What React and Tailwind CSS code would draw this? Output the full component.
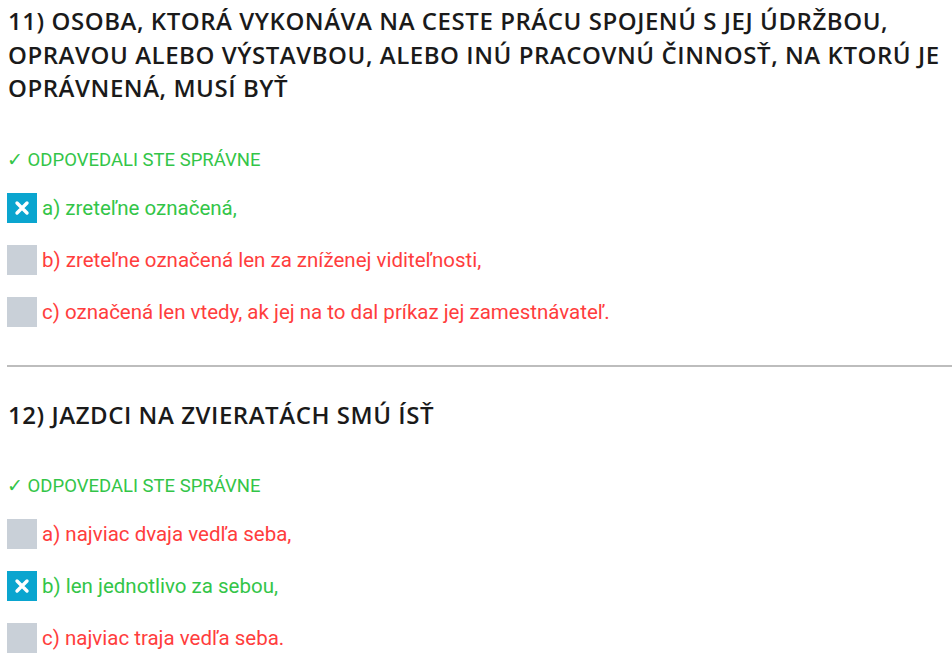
import React from "react";

const QUESTIONS = [
  {
    num: 11,
    title: "Osoba, ktorá vykonáva na ceste prácu spojenú s jej údržbou, opravou alebo výstavbou, alebo inú pracovnú činnosť, na ktorú je oprávnená, musí byť",
    answers: [
      { text: "a) zreteľne označená,", correct: true, checked: true },
      { text: "b) zreteľne označená len za zníženej viditeľnosti,", correct: false },
      { text: "c) označená len vtedy, ak jej na to dal príkaz jej zamestnávateľ.", correct: false },
    ],
  },
  {
    num: 12,
    title: "Jazdci na zvieratách smú ísť",
    answers: [
      { text: "a) najviac dvaja vedľa seba,", correct: false },
      { text: "b) len jednotlivo za sebou,", correct: true, checked: true },
      { text: "c) najviac traja vedľa seba.", correct: false },
    ],
  },
];

function Box({ checked }) {
  if (!checked) return <div className="w-[30px] h-[30px] shrink-0 bg-[#c9d0d8]" />;
  return (
    <div className="w-[30px] h-[30px] shrink-0 bg-[#0aa5cf] flex items-center justify-center">
      <svg width="16" height="16" viewBox="0 0 16 16">
        <path d="M3 3 L13 13 M13 3 L3 13" stroke="#fff" strokeWidth="3.4" strokeLinecap="round" />
      </svg>
    </div>
  );
}

function Question({ q }) {
  return (
    <div className="pl-[7px]">
      <h2 className="pt-[4px] pl-px text-[24px] leading-[33.5px] font-semibold tracking-[0.55px] uppercase text-[#1a1a1a] font-['Open_Sans',sans-serif]">
        {q.num}) {q.title}
      </h2>
      <div className="mt-[43px] text-[18.5px] leading-[24px] text-[#33c548] uppercase font-['Roboto',sans-serif]">
        ✓ Odpovedali ste správne
      </div>
      <div className="mt-[21px] flex flex-col gap-[22px]">
        {q.answers.map((a) => (
          <div key={a.text} className="flex items-center gap-[5px]">
            <Box checked={a.checked} />
            <span className={"text-[20.5px] leading-[30px] font-['Roboto',sans-serif] " + (a.correct ? "text-[#33c548]" : "text-[#ff3d3d]")}>
              {a.text}
            </span>
          </div>
        ))}
      </div>
    </div>
  );
}

export default function App() {
  return (
    <div className="bg-white w-[952px] h-[655px] overflow-hidden">
      <Question q={QUESTIONS[0]} />
      <div className="ml-[7px] mt-[38px] mb-[27px] h-[2px] bg-[#bdbdbd]" />
      <Question q={QUESTIONS[1]} />
    </div>
  );
}
